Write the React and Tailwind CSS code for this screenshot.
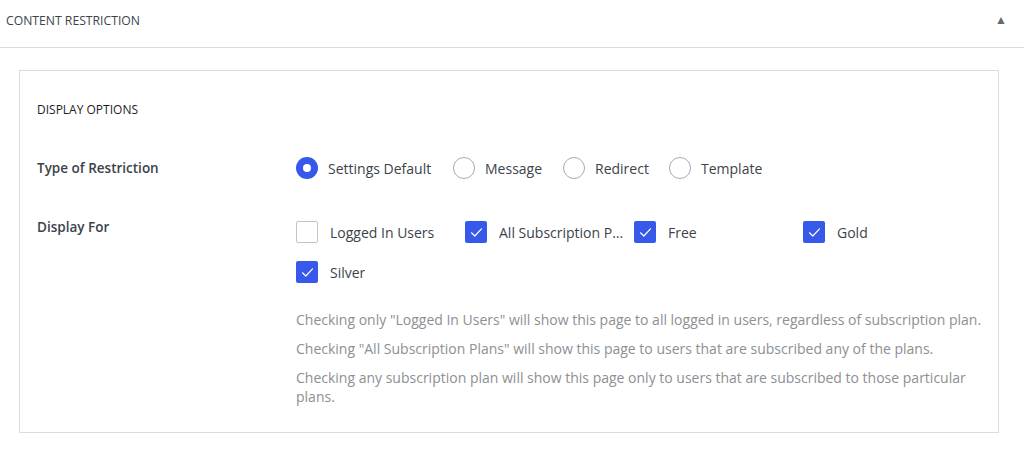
const radios = [
  { label: 'Settings Default', checked: true, w: 'w-[157px]' },
  { label: 'Message', checked: false, w: 'w-[110px]' },
  { label: 'Redirect', checked: false, w: 'w-[106px]' },
  { label: 'Template', checked: false, w: 'w-auto' },
];

const plans = [
  { label: 'Logged In Users', checked: false },
  { label: 'All Subscription Plans', checked: true },
  { label: 'Free', checked: true },
  { label: 'Gold', checked: true },
  { label: 'Silver', checked: true },
];

function Radio({ label, checked, w }) {
  return (
    <label className={`flex items-center gap-[10px] ${w}`}>
      {checked ? (
        <span className="w-[22px] h-[22px] rounded-full bg-[#3858e9] flex items-center justify-center shrink-0">
          <span className="w-[8px] h-[8px] rounded-full bg-white" />
        </span>
      ) : (
        <span className="w-[22px] h-[22px] rounded-full border border-[#a7aaad] bg-white shrink-0" />
      )}
      <span className="text-[14px] text-[#3c434a]">{label}</span>
    </label>
  );
}

function Checkbox({ label, checked }) {
  return (
    <label className="flex items-center gap-[12px] w-[169px] h-[22px] pr-[9px]">
      {checked ? (
        <span className="w-[22px] h-[22px] rounded-[2px] bg-[#3858e9] flex items-center justify-center shrink-0">
          <svg width="13" height="11" viewBox="0 0 13 11" fill="none">
            <path d="M1.5 5.8 L4.8 9 L11.5 1.8" stroke="white" strokeWidth="1.2" strokeLinecap="round" strokeLinejoin="round" />
          </svg>
        </span>
      ) : (
        <span className="w-[22px] h-[22px] rounded-[2px] border border-[#c3c4c7] bg-white shrink-0" />
      )}
      <span className="text-[14px] text-[#3c434a] truncate">{label}</span>
    </label>
  );
}

export default function App() {
  return (
    <div className="w-[1024px] h-[451px] bg-white font-['Open_Sans',sans-serif] text-[#1e1e1e]">
      <div className="h-[48px] flex items-center justify-between pl-[6px] pr-[17px] border-b border-[#dcdcde]">
        <h2 className="text-[12.2px] text-[#3c434a] -mt-[4px]">CONTENT RESTRICTION</h2>
        <span className="text-[12px] text-[#646970] -mt-[8px]">▲</span>
      </div>

      <div className="ml-[19px] mr-[25px] mt-[22px] border border-[#dcdcde] pl-[17px] pr-[17px] pt-[30px] pb-[26px]">
        <h3 className="text-[12px] text-[#1e1e1e] leading-[18px]">DISPLAY OPTIONS</h3>

        <div className="flex items-center mt-[38px]">
          <div className="w-[259px] text-[13.5px] font-semibold text-[#3c434a]">Type of Restriction</div>
          <div className="flex items-center">
            {radios.map(r => (
              <Radio key={r.label} {...r} />
            ))}
          </div>
        </div>

        <div className="flex mt-[37px]">
          <div className="w-[259px] shrink-0 text-[13.5px] font-semibold text-[#3c434a] pt-[1px]">Display For</div>
          <div>
            <div className="flex flex-wrap w-[676px] gap-y-[18px] pt-[5px]">
              {plans.map(p => (
                <Checkbox key={p.label} {...p} />
              ))}
            </div>
            <div className="mt-[27px] w-[692px] text-[14px] text-[#8c8f94] leading-[19px]">
              <p>Checking only "Logged In Users" will show this page to all logged in users, regardless of subscription plan.</p>
              <p className="mt-[10px]">Checking "All Subscription Plans" will show this page to users that are subscribed any of the plans.</p>
              <p className="mt-[10px]">Checking any subscription plan will show this page only to users that are subscribed to those particular plans.</p>
            </div>
          </div>
        </div>
      </div>
    </div>
  );
}
